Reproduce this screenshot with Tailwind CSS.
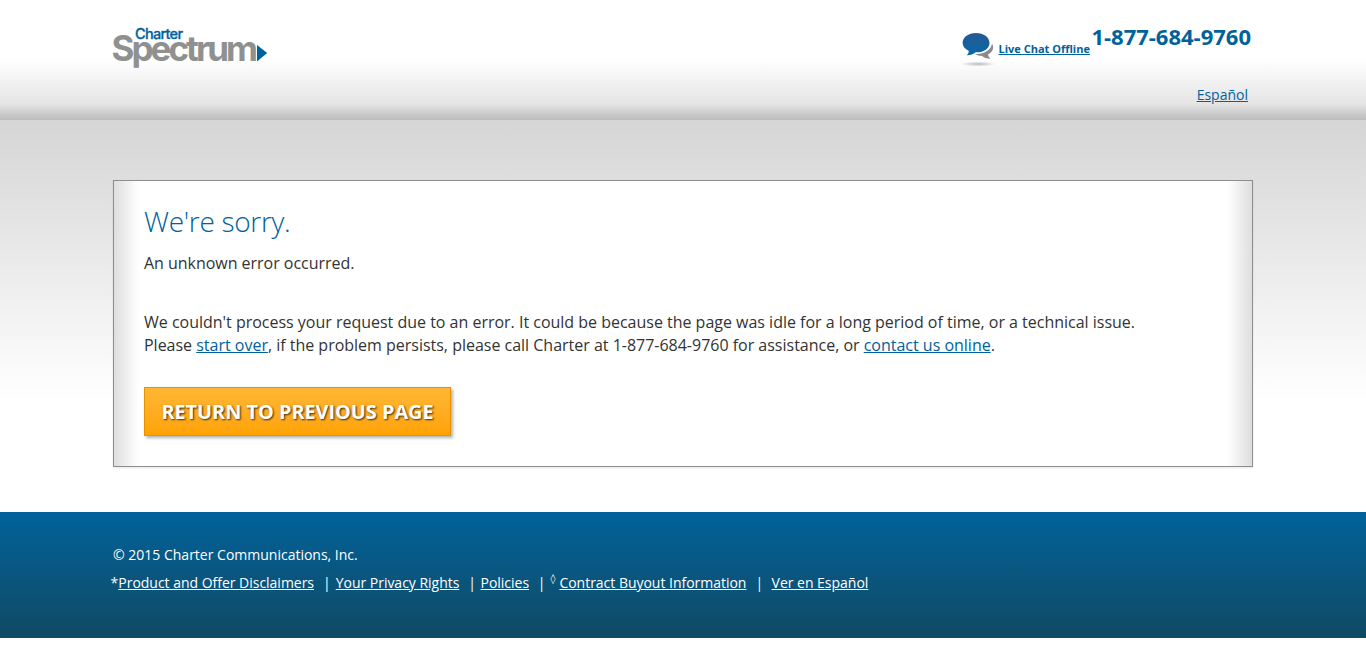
<!DOCTYPE html>
<html lang="en">
<head>
<meta charset="utf-8">
<title>Charter Spectrum</title>
<script src="https://cdn.jsdelivr.net/npm/@tailwindcss/browser@4"></script>
</head>
<body class="bg-white font-['Open_Sans',sans-serif] text-[#333]">
<header class="h-[120px] bg-[linear-gradient(to_bottom,#fff_0,#fff_60px,#e4e4e4_104px,#bcbcbc_120px)]">
  <div class="mx-auto flex w-[1140px] justify-between">
    <svg class="mt-[24px] h-[48px] w-[160px] overflow-visible" viewBox="113 24 160 48" role="img" aria-label="Charter Spectrum">
      <text x="111.500" y="61.200" font-family="Inter, sans-serif" font-weight="700" font-size="35" fill="#8f9190" textLength="146.500" lengthAdjust="spacing">Spectrum</text>
      <text x="135" y="39" font-family="Inter, sans-serif" font-weight="500" font-size="14.500" fill="#00629b" stroke="#00629b" stroke-width=".3" textLength="48" lengthAdjust="spacing">Charter</text>
      <path d="M257 45L267.200 53L257 61.500Z" fill="#00629b"/>
    </svg>
    <div class="flex flex-col items-end text-[#00629b]">
      <div class="flex h-[72px] items-start pr-[2px]">
        <svg class="mt-[28px] h-[40px] w-[38px]" viewBox="960.3 28 38 40">
          <defs>
            <linearGradient id="b" x1="0" y1="0" x2="0" y2="1"><stop offset="0" stop-color="#245994"/><stop offset="1" stop-color="#0868a8"/></linearGradient>
            <radialGradient id="s"><stop offset="0" stop-color="#bbb"/><stop offset="1" stop-color="#bbb" stop-opacity="0"/></radialGradient>
          </defs>
          <ellipse cx="978.500" cy="64" rx="17.500" ry="2.600" fill="url(#s)"/>
          <path d="M992.300 43.500C995 48 992.500 52.500 988.500 54.300C988.500 56.500 989.500 58 991 58.800C987.500 59 984.500 57.800 982.500 56C979.500 56 977 55.200 975.500 54C984.500 54.500 991.500 50 992.300 43.500Z" fill="#8b8b8b"/>
          <path d="M976.300 33C984 33 989.800 37.300 989.800 43C989.800 48.700 984 52.600 976 52.300C973.500 54.500 970.500 55.300 967 55.200C968.500 54 969.200 52.500 969 50.700C965.200 49 962.900 46.200 962.900 43C962.900 37.300 968.700 33 976.300 33Z" fill="url(#b)"/>
        </svg>
        <a href="#" class="mt-[41px] text-[11px] leading-[15px] font-bold whitespace-nowrap underline">Live Chat Offline</a>
        <span class="mt-[21px] ml-[1.5px] text-[22px] leading-[30px] font-bold whitespace-nowrap">1-877-684-9760</span>
      </div>
      <a href="#" class="mt-[13px] mr-[5px] text-sm underline">Español</a>
    </div>
  </div>
</header>
<main class="h-[392px] bg-[linear-gradient(to_bottom,#d5d5d5_0,#fff_280px)] pt-[60px]">
  <section class="mx-auto h-[287px] w-[1140px] border border-[#8e8e8e] bg-[linear-gradient(to_right,#dedede_0,#fff_25px,#fff_1113px,#dedede_1138px)] pl-[30px] shadow-[0_1px_2px_rgba(0,0,0,0.1)]">
    <h1 class="pt-[19px] text-[28px] leading-[42px] font-light tracking-[-0.3px] text-[#00629b]">We're sorry.</h1>
    <p class="mt-[10px] text-base leading-[23px] tracking-[-0.03px]">An unknown error occurred.</p>
    <p class="mt-[36px] text-base leading-[23px] tracking-[-0.01px]">We couldn't process your request due to an error. It could be because the page was idle for a long period of time, or a technical issue.<br>Please <a href="#" class="text-[#00629b] underline">start over</a>, if the problem persists, please call Charter at 1-877-684-9760 for assistance, or <a href="#" class="text-[#00629b] underline">contact us online</a>.</p>
    <button class="mt-[30px] flex h-[49px] w-[307px] items-center justify-center border border-[#e59400] bg-linear-to-b from-[#ffb733] to-[#ffa300] text-[19.85px] font-bold whitespace-nowrap text-white shadow-[2px_2px_3px_rgba(0,0,0,0.3)] [text-shadow:1px_1px_2px_rgba(0,0,0,0.75)]">RETURN TO PREVIOUS PAGE</button>
  </section>
</main>
<footer class="h-[126px] bg-linear-to-b from-[#00629b] to-[#0f4a63] pt-[32px] text-sm leading-[22px] text-white">
  <div class="mx-auto w-[1140px]">
    <p>© 2015 Charter Communications, Inc.</p>
    <div class="mt-[6px] -ml-[2.4px] flex tracking-[-0.02px] whitespace-nowrap">
      <span>*</span><a href="#" class="underline">Product and Offer Disclaimers</a>
      <span class="mr-[5px] ml-[9px]">|</span><a href="#" class="underline">Your Privacy Rights</a>
      <span class="mr-[4.5px] ml-[9px]">|</span><a href="#" class="underline">Policies</a>
      <span class="mr-[5px] ml-[8.7px]">|</span><span class="-mt-[4px] mr-[3px] w-[6px] font-['DejaVu_Sans'] text-[10px]">◊</span><a href="#" class="underline">Contract Buyout Information</a>
      <span class="mr-[8.5px] ml-[9px]">|</span><a href="#" class="underline">Ver en Español</a>
    </div>
  </div>
</footer>
</body>
</html>
